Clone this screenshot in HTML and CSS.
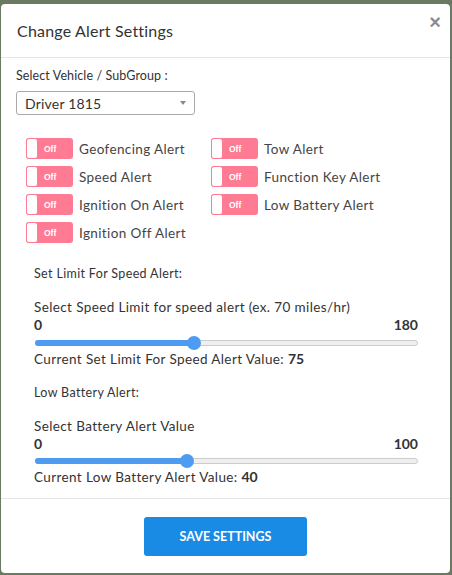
FILE: index.html
```html
<!DOCTYPE html>
<html>
<head>
<meta charset="utf-8">
<link rel="stylesheet" href="styles.css">
</head>
<body>
<div class="modal">
  <div class="modal-header">
    <h4 class="modal-title">Change Alert Settings</h4>
    <span class="close">&times;</span>
  </div>
  <div class="modal-body">
    <div class="field-label">Select Vehicle / SubGroup :</div>
    <div class="select"><span>Driver 1815</span><span class="caret"></span></div>
    <div class="toggles">
      <div class="toggle-col">
        <div class="toggle-row"><span class="switch"><span class="knob"></span><span class="off">Off</span></span><span class="toggle-label">Geofencing Alert</span></div>
        <div class="toggle-row"><span class="switch"><span class="knob"></span><span class="off">Off</span></span><span class="toggle-label">Speed Alert</span></div>
        <div class="toggle-row"><span class="switch"><span class="knob"></span><span class="off">Off</span></span><span class="toggle-label">Ignition On Alert</span></div>
        <div class="toggle-row"><span class="switch"><span class="knob"></span><span class="off">Off</span></span><span class="toggle-label">Ignition Off Alert</span></div>
      </div>
      <div class="toggle-col">
        <div class="toggle-row"><span class="switch"><span class="knob"></span><span class="off">Off</span></span><span class="toggle-label">Tow Alert</span></div>
        <div class="toggle-row"><span class="switch"><span class="knob"></span><span class="off">Off</span></span><span class="toggle-label">Function Key Alert</span></div>
        <div class="toggle-row"><span class="switch"><span class="knob"></span><span class="off">Off</span></span><span class="toggle-label">Low Battery Alert</span></div>
      </div>
    </div>
    <div class="limit-section">
      <div class="section-title">Set Limit For Speed Alert:</div>
      <div class="slider-label">Select Speed Limit for speed alert (ex. 70 miles/hr)</div>
      <div class="range-labels"><span>0</span><span>180</span></div>
      <div class="slider"><div class="track"><div class="fill" style="width: 41.67%"><span class="thumb"></span></div></div></div>
      <div class="current">Current Set Limit For Speed Alert Value: <b>75</b></div>
    </div>
    <div class="limit-section second">
      <div class="section-title">Low Battery Alert:</div>
      <div class="slider-label">Select Battery Alert Value</div>
      <div class="range-labels"><span>0</span><span>100</span></div>
      <div class="slider"><div class="track"><div class="fill" style="width: 40%"><span class="thumb"></span></div></div></div>
      <div class="current">Current Low Battery Alert Value: <b>40</b></div>
    </div>
  </div>
  <div class="modal-footer">
    <button class="save">SAVE SETTINGS</button>
  </div>
</div>
</body>
</html>
```
FILE: styles.css
```css
html, body {
  margin: 0;
  padding: 0;
}
body {
  background: #6b7a63;
  padding: 4px 2px 2px 1px;
  font-family: "Lato", "Open Sans", sans-serif;
  color: #333;
  height: 575px;
  box-sizing: border-box;
}
.modal {
  background: #fff;
  border-radius: 4px;
  width: 449px;
  height: 569px;
  box-sizing: border-box;
  display: flex;
  flex-direction: column;
}
.modal-header {
  position: relative;
  padding: 18px 16px 17px;
  border-bottom: 1px solid #e5e5e5;
}
.modal-title {
  margin: 0;
  font-size: 16px;
  line-height: 18px;
  font-weight: normal;
  color: #333;
  letter-spacing: 0.2px;
}
.close {
  position: absolute;
  right: 9px;
  top: 8px;
  font-size: 20px;
  font-weight: bold;
  color: #000;
  opacity: 0.45;
  line-height: 20px;
  font-family: "Liberation Sans", sans-serif;
}
.modal-body {
  padding: 10px 15px 0 15px;
  flex: 1;
}
.field-label {
  font-size: 12.5px;
  line-height: 16px;
  color: #333;
  letter-spacing: 0.1px;
}
.select {
  margin-top: 7px;
  width: 179px;
  height: 24px;
  box-sizing: border-box;
  border: 1px solid #aaa;
  border-radius: 3px;
  display: flex;
  align-items: center;
  justify-content: space-between;
  padding: 0 8px 0 8px;
  font-size: 14px;
  color: #333;
  letter-spacing: 0.2px;
}
.caret {
  width: 0;
  height: 0;
  border-left: 3.5px solid transparent;
  border-right: 3.5px solid transparent;
  border-top: 4px solid #888;
}
.toggles {
  display: flex;
  margin-top: 23px;
  padding-left: 10px;
}
.toggle-col {
  display: flex;
  flex-direction: column;
  gap: 7px;
}
.toggle-col:first-child {
  width: 185px;
}
.toggle-row {
  display: flex;
  align-items: center;
  height: 21px;
}
.switch {
  width: 47px;
  height: 21px;
  box-sizing: border-box;
  background: #ff7b94;
  border-radius: 3px;
  display: flex;
  align-items: center;
  position: relative;
}
.knob {
  width: 12px;
  height: 21px;
  box-sizing: border-box;
  background: #fff;
  border: 1.5px solid #ff7b94;
  border-radius: 3px;
}
.off {
  color: #fff;
  font-size: 8.5px;
  font-weight: bold;
  margin-left: 6px;
  font-family: "Liberation Sans", sans-serif;
}
.toggle-label {
  margin-left: 6px;
  font-size: 13.5px;
  color: #444;
  letter-spacing: 0.38px;
}
.limit-section {
  margin-top: 22px;
  padding-left: 18px;
  padding-right: 17px;
}
.limit-section.second {
  margin-top: 16px;
}
.section-title {
  font-size: 12.5px;
  line-height: 17px;
  color: #333;
  letter-spacing: 0.35px;
}
.slider-label {
  margin-top: 17px;
  font-size: 13.5px;
  line-height: 17px;
  color: #333;
  letter-spacing: 0.38px;
}
.range-labels {
  display: flex;
  justify-content: space-between;
  font-size: 14px;
  line-height: 17px;
  font-weight: bold;
  color: #333;
}
.slider {
  margin-top: 2.5px;
  height: 14px;
  display: flex;
  align-items: center;
  padding-left: 1px;
}
.track {
  flex: 1;
  height: 6px;
  box-sizing: border-box;
  border: 1px solid #ccc;
  background: #efefef;
  border-radius: 4px;
  position: relative;
}
.fill {
  position: absolute;
  left: -1px;
  top: -1px;
  height: 6px;
  background: #4d9cf2;
  border-radius: 4px;
}
.thumb {
  position: absolute;
  right: -7px;
  top: -4px;
  width: 14px;
  height: 14px;
  border-radius: 50%;
  background: #4d9cf2;
}
.current {
  font-size: 13.5px;
  line-height: 17px;
  color: #333;
  letter-spacing: 0.38px;
}
.current b {
  font-size: 14px;
  letter-spacing: 0;
}
.modal-footer {
  border-top: 1px solid #e5e5e5;
  padding: 18px 0 17px;
  display: flex;
  justify-content: center;
}
.save {
  width: 163px;
  height: 39px;
  background: #1a8be4;
  color: #fff;
  border: none;
  border-radius: 3px;
  font-family: inherit;
  font-size: 12.5px;
  font-weight: bold;
}
```
